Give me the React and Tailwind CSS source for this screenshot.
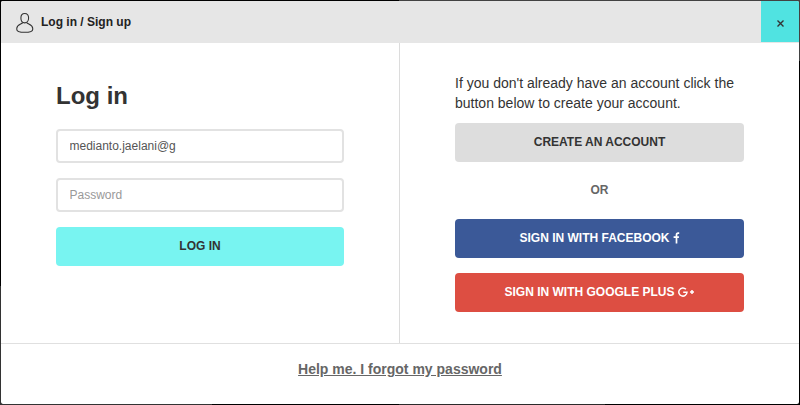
function UserIcon() {
  return (
    <svg className="block h-[22px] w-[18px]" viewBox="0 0 18 22" fill="none" stroke="#333" strokeWidth="1.1" strokeLinejoin="round">
      <path d="M8.700 1.500C6 1.500 4.900 3.400 4.900 6c0 2.700 1.500 4.900 3.800 4.900s3.900-2.200 3.900-4.900C12.600 3.400 11.400 1.500 8.700 1.500z" />
      <path d="M6.700 10.600C5.700 12.100.8 12.600.8 16.200v1.200c0 1.600 3.200 2.900 7.900 2.900s8-1.300 8-2.900v-1.200c0-3.600-5-4.100-6-5.600" />
    </svg>
  );
}

function FacebookIcon() {
  return (
    <svg className="block h-[12px] w-[7px]" viewBox="0 0 7 12" fill="none" stroke="#fff" strokeWidth="1.700">
      <path d="M6.200 1.100H5.100Q3.500 1.100 3.500 2.900V11.400M.6 5.100h5.300" />
    </svg>
  );
}

function GooglePlusIcon() {
  return (
    <svg className="block h-[10px] w-[17px]" viewBox="0 0 17 10" fill="none" stroke="#fff" strokeWidth="1.500">
      <path d="M7.900 2.200A4.100 4.100 0 1 0 9 5.300H5.200M14 3v4M12 5h4" />
    </svg>
  );
}

const field =
  "block h-[34px] w-full rounded-[4px] border-2 border-[#e2e2e2] bg-white px-[11.500px] text-[12px] text-[#555] outline-none placeholder:text-[#999] placeholder:opacity-100";
const button =
  "flex h-[39px] w-full items-center justify-center rounded-[4px] pb-[2px] text-[12px] font-bold whitespace-nowrap";

export default function App() {
  return (
    <div className="h-[405px] w-[800px] bg-black font-['Liberation_Sans',Arial,sans-serif] text-[#333]">
      <div className="flex h-px">
        <div className="w-[399px]" />
        <div className="flex-1 bg-[#424242]" />
      </div>
      <div className="flex h-[403px]">
        <div className="flex w-px flex-col justify-end">
          <div className="h-[118px] bg-[#333]" />
        </div>
        <div className="flex h-[403px] w-[798px] flex-col overflow-hidden rounded-[2px] bg-white">
          <header className="flex h-[42px] shrink-0 items-start bg-[#e6e6e6]">
            <div className="flex flex-1 items-start pl-[15px] pt-[11px]">
              <UserIcon />
              <h2 className="ml-[7px] mt-[2px] text-[12px] leading-4 font-bold whitespace-nowrap text-[#222]">Log in / Sign up</h2>
            </div>
            <button aria-label="Close" className="flex h-[41px] w-[38px] items-center justify-center bg-[#50e3e1] pt-[3px]">
              <svg className="h-[7px] w-[7px]" viewBox="0 0 7 7" fill="none" stroke="#333" strokeWidth="1.400">
                <path d="M.5.5l6 6M6.500.5l-6 6" />
              </svg>
            </button>
          </header>
          <main className="flex h-[300px] shrink-0">
            <section className="w-[398px] pt-[37px] pr-[55px] pl-[55px]">
              <h1 className="text-[24px] leading-8 font-bold">Log in</h1>
              <input className={`${field} mt-[17px]`} defaultValue="medianto.jaelani@g" />
              <input className={`${field} mt-[15px]`} placeholder="Password" />
              <button className={`${button} mt-[15px] bg-[#78f4f1]`}>LOG IN</button>
            </section>
            <section className="w-[400px] border-l border-[#dcdcdc] pt-[30px] pr-[55px] pl-[55px]">
              <p className="text-[14px] leading-5 whitespace-nowrap">
                If you don't already have an account click the
                <br />
                button below to create your account.
              </p>
              <button className={`${button} mt-[10px] bg-[#ddd]`}>CREATE AN ACCOUNT</button>
              <p className="mt-[18px] text-center text-[12px] leading-5 font-bold text-[#666]">OR</p>
              <button className={`${button} mt-[19px] gap-[3px] bg-[#3b5998] text-white`}>
                <span>SIGN IN WITH FACEBOOK</span>
                <FacebookIcon />
              </button>
              <button className={`${button} mt-[15px] gap-[3px] bg-[#dd4e42] text-white`}>
                <span>SIGN IN WITH GOOGLE PLUS</span>
                <GooglePlusIcon />
              </button>
            </section>
          </main>
          <footer className="flex flex-1 items-start justify-center border-t border-[#e0e0e0] pt-[15px]">
            <a className="text-[14px] leading-5 font-bold text-[#666] underline" href="#">Help me. I forgot my password</a>
          </footer>
        </div>
        <div className="h-[60px] w-px bg-[#424242]" />
      </div>
      <div className="flex h-px">
        <div className="w-[212px] bg-[#333]" />
        <div className="w-[187px]" />
        <div className="w-[206px] bg-[#2b2b2b]" />
      </div>
    </div>
  );
}
